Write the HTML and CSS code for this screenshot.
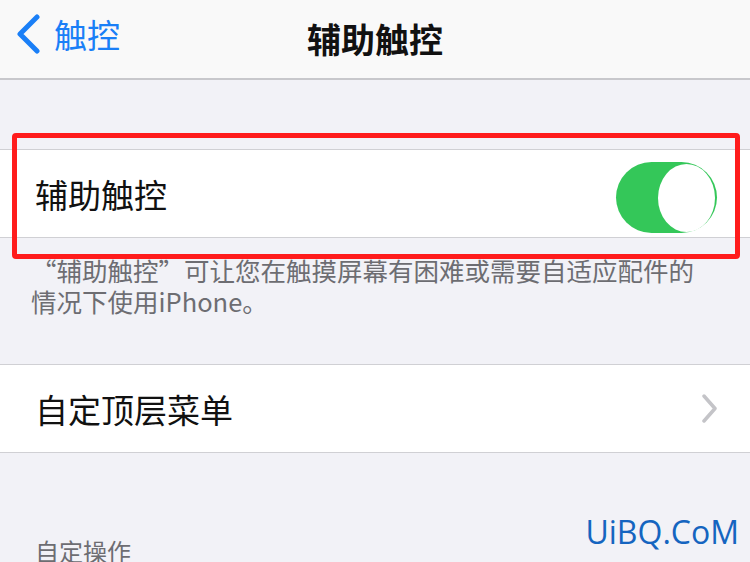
FILE: index.html
```html
<!DOCTYPE html>
<html lang="zh-CN">

<head>
  <meta charset="UTF-8">
  <meta name="viewport" content="width=device-width, initial-scale=1.0">
  <title>辅助触控</title>
  <link rel="stylesheet" href="styles.css">
</head>

<body>
  <div class="screen">
    <header class="navbar">
      <a class="back" href="#">
        <svg class="back-icon" width="26" height="40" viewBox="0 0 26 40">
          <polyline points="21,3 4,20 21,37" />
        </svg>
        触控
      </a>
      <h1 class="nav-title">辅助触控</h1>
    </header>

    <section class="group group-first">
      <div class="cell marked">
        <span class="cell-label">辅助触控</span>
        <span class="switch on"><span class="knob"></span></span>
        <div class="mark-box"></div>
      </div>
      <p class="footnote">“辅助触控”可让您在触摸屏幕有困难或需要自适应配件的<br>情况下使用iPhone。</p>
    </section>

    <section class="group">
      <div class="cell">
        <span class="cell-label">自定顶层菜单</span>
        <svg class="chevron" width="15" height="29" viewBox="0 0 15 29">
          <polyline points="2,2 13,14.5 2,27" />
        </svg>
      </div>
    </section>

    <div class="group-header">自定操作</div>

    <div class="watermark">UiBQ.CoM</div>
  </div>
</body>

</html>
```

FILE: styles.css
```css
html,
body {
  margin: 0;
  padding: 0;
}

body {
  font-family: "Noto Sans CJK SC", "Noto Sans", sans-serif;
  background-color: #f2f2f7;
}

.screen {
  position: relative;
  width: 750px;
  height: 562px;
  overflow: hidden;
  background-color: #f2f2f7;
}

/* 상단 네비게이션 */
.navbar {
  position: relative;
  height: 78px;
  display: flex;
  align-items: center;
  justify-content: center;
  background-color: #f9f9f9;
  border-bottom: 2px solid #c8c8cc;
}

.back {
  position: absolute;
  left: 16px;
  top: 14px;
  display: flex;
  align-items: center;
  gap: 12px;
  color: #1a7ff7;
  font-size: 33px;
  line-height: 40px;
  text-decoration: none;
}

.back-icon polyline {
  fill: none;
  stroke: #1a7ff7;
  stroke-width: 5;
  stroke-linecap: round;
  stroke-linejoin: round;
}

.nav-title {
  margin: 0;
  font-size: 34px;
  font-weight: 700;
  color: #111;
  line-height: 40px;
}

/* 목록 */
.group-first {
  margin-top: 69px;
}

.cell {
  position: relative;
  height: 87px;
  display: flex;
  align-items: center;
  justify-content: space-between;
  padding: 0 33px 0 35px;
  background-color: #fff;
  border-top: 1px solid #d0d0d4;
  border-bottom: 1px solid #d0d0d4;
}

.cell-label {
  font-size: 33px;
  color: #111;
}

.switch {
  width: 101px;
  height: 71px;
  margin-top: 8px;
  border-radius: 36px;
  background-color: #34c759;
  display: flex;
  align-items: center;
  justify-content: flex-end;
  padding: 0 2px;
  box-sizing: border-box;
}

.knob {
  width: 57px;
  height: 68px;
  border-radius: 50%;
  background-color: #fff;
}

.chevron polyline {
  fill: none;
  stroke: #c4c4c8;
  stroke-width: 3.5;
  stroke-linecap: round;
  stroke-linejoin: round;
}

.mark-box {
  position: absolute;
  left: 12px;
  right: 10px;
  top: -17px;
  bottom: -22px;
  border: 5px solid #ff1c1c;
  border-radius: 4px;
}

.footnote {
  margin: 16px 0 48px;
  padding: 0 30px 0 31px;
  font-size: 25.5px;
  line-height: 31px;
  color: #6d6d72;
}

.group-header {
  margin-top: 84px;
  padding: 0 35px;
  font-size: 24px;
  line-height: 28px;
  color: #6d6d72;
}

.watermark {
  position: absolute;
  right: 11px;
  bottom: 9px;
  font-family: "Open Sans", "DejaVu Sans", sans-serif;
  font-size: 32px;
  color: #1565c0;
}
```
